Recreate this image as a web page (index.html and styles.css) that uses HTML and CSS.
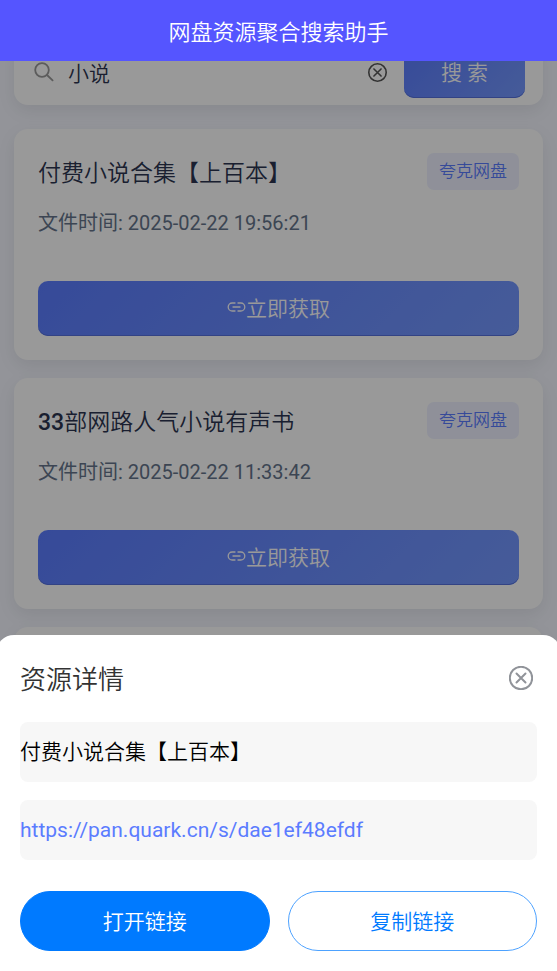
FILE: index.html
```html
<!DOCTYPE html>
<html lang="zh-CN">
<head>
<meta charset="utf-8">
<meta name="viewport" content="width=device-width, initial-scale=1">
<title>网盘资源聚合搜索助手</title>
<link rel="stylesheet" href="styles.css">
</head>
<body>
<header class="topbar"><h1 class="topbar-title">网盘资源聚合搜索助手</h1></header>

<main class="page">
  <form class="search">
    <label class="search-field">
      <svg class="search-icon" viewBox="0 0 20 20" aria-hidden="true"><circle cx="8" cy="8" r="6.8"/><path d="M13 13l5.6 5.4"/></svg>
      <input class="search-input" type="text" value="小说" aria-label="搜索">
    </label>
    <button class="icon-button clear" type="button" aria-label="清除">
      <svg viewBox="0 0 24 24" aria-hidden="true"><circle cx="12" cy="12" r="11"/><path d="M7.500 7.500l9 9M16.500 7.500l-9 9"/></svg>
    </button>
    <button class="primary search-submit" type="button">搜 索</button>
  </form>

  <article class="card">
    <div class="card-head">
      <h2 class="card-title">付费小说合集【上百本】</h2>
      <span class="tag">夸克网盘</span>
    </div>
    <p class="card-time">文件时间: 2025-02-22 19:56:21</p>
    <button class="primary get" type="button">
      <svg class="link-icon" viewBox="0 0 18 10" aria-hidden="true"><path d="M7.500 1H4.700a4 4 0 0 0 0 8H7.500M10.500 1h2.800a4 4 0 0 1 0 8H10.500M5.500 5h7"/></svg>立即获取
    </button>
  </article>

  <article class="card">
    <div class="card-head">
      <h2 class="card-title"><span class="digits">33</span>部网路人气小说有声书</h2>
      <span class="tag">夸克网盘</span>
    </div>
    <p class="card-time">文件时间: 2025-02-22 11:33:42</p>
    <button class="primary get" type="button">
      <svg class="link-icon" viewBox="0 0 18 10" aria-hidden="true"><path d="M7.500 1H4.700a4 4 0 0 0 0 8H7.500M10.500 1h2.800a4 4 0 0 1 0 8H10.500M5.500 5h7"/></svg>立即获取
    </button>
  </article>

  <article class="card"></article>
</main>

<div class="mask"></div>

<section class="sheet" role="dialog" aria-labelledby="sheet-title">
  <div class="sheet-head">
    <h2 class="sheet-title" id="sheet-title">资源详情</h2>
    <button class="icon-button close" type="button" aria-label="关闭">
      <svg viewBox="0 0 24 24" aria-hidden="true"><circle cx="12" cy="12" r="11.200"/><path d="M7.500 7.500l9 9M16.500 7.500l-9 9"/></svg>
    </button>
  </div>
  <div class="sheet-rows">
    <p class="row">付费小说合集【上百本】</p>
    <p class="row"><a class="row-link" href="https://pan.quark.cn/s/dae1ef48efdf">https://pan.quark.cn/s/dae1ef48efdf</a></p>
  </div>
  <div class="actions">
    <button class="pill pill-solid" type="button">打开链接</button>
    <button class="pill pill-outline" type="button">复制链接</button>
  </div>
</section>
</body>
</html>
```
FILE: styles.css
```css
* {
  box-sizing: border-box;
}

body {
  margin: 0;
  overflow: hidden;
  background: #f5f7ff;
  color: #000;
  font-family: Roboto, "Noto Sans CJK SC", sans-serif;
  font-size: 21px;
  font-weight: 350;
}

h1, h2, p {
  margin: 0;
  font-weight: inherit;
}

button, input {
  border: 0;
  padding: 0;
  background: none;
  font: inherit;
}

svg {
  fill: none;
  stroke: currentColor;
  stroke-linecap: round;
}

.topbar {
  position: fixed;
  inset: 0 0 auto;
  z-index: 3;
  display: flex;
  align-items: center;
  justify-content: center;
  height: 61px;
  padding-bottom: 2px;
  background: #5555ff;
  color: #fff;
}

.topbar-title {
  font-size: 22px;
}

.page {
  display: flex;
  flex-direction: column;
  gap: 18px;
  height: 100vh;
  padding: 39px 14px 0;
}

.search,
.card {
  flex-shrink: 0;
  border-radius: 14px;
  background: #fff;
  box-shadow: 0 6px 18px rgba(0, 0, 0, 0.08);
}

.search {
  display: flex;
  align-items: center;
  gap: 17px;
  margin-bottom: 6px;
  padding: 7px 18px 7px 20px;
}

.search-field {
  display: flex;
  flex: 1;
  align-items: center;
  gap: 14px;
  min-width: 0;
}

.search-icon {
  flex: none;
  width: 20px;
  height: 20px;
  color: #999;
  stroke-width: 1.8;
}

.search-input {
  width: 100%;
  min-width: 0;
  color: #2c3550;
}

.icon-button {
  display: block;
  flex: none;
}

.icon-button svg {
  display: block;
  width: 100%;
  height: 100%;
}

.clear {
  width: 19px;
  height: 19px;
  color: #555;
  stroke-width: 2;
}

.primary {
  padding-bottom: 3px;
  border-radius: 10px;
  background: linear-gradient(135deg, #5b7cff, #7599ff);
  box-shadow: inset 0 -1px #5571dc;
  color: #fff;
}

.search-submit {
  width: 121px;
  height: 52px;
}

.card {
  min-height: 231px;
  padding: 24px;
}

.card-head {
  display: flex;
  align-items: center;
  justify-content: space-between;
  height: 37px;
}

.card-title {
  padding-bottom: 2px;
  color: #2c3550;
  font-size: 23px;
}

.digits {
  font-weight: 500;
}

.tag {
  padding: 0 12px;
  border-radius: 7px;
  background: #eef1ff;
  color: #5b7cff;
  font-size: 17px;
  line-height: 37px;
}

.card-time {
  margin: 18px 0 43px;
  color: #64748b;
  font-size: 20px;
  font-weight: 400;
  line-height: 30px;
}

.get {
  display: flex;
  align-items: center;
  justify-content: center;
  width: 100%;
  height: 55px;
}

.link-icon {
  width: 19px;
  height: 10px;
  stroke-width: 1.3;
}

.mask {
  position: fixed;
  inset: 0;
  z-index: 2;
  background: rgba(0, 0, 0, 0.4);
}

.sheet {
  position: fixed;
  inset: auto -4px 0;
  z-index: 4;
  padding: 0 24px 20px;
  border-radius: 18px 18px 0 0;
  background: #fff;
}

.sheet-head {
  display: flex;
  align-items: center;
  justify-content: space-between;
  height: 87px;
  padding: 0 4px 2px 0;
}

.sheet-title {
  color: #333;
  font-size: 26px;
}

.close {
  width: 24px;
  height: 24px;
  color: #909399;
  stroke-width: 2;
}

.sheet-rows {
  display: grid;
  gap: 18px;
}

.row {
  border-radius: 8px;
  background: #f7f7f7;
  line-height: 60px;
}

.row-link {
  color: #5b7cff;
  font-weight: 400;
  text-decoration: none;
}

.actions {
  display: grid;
  grid-template-columns: 1fr 1fr;
  gap: 18px;
  margin-top: 31px;
}

.pill {
  height: 60px;
  padding-bottom: 3px;
  border: 1px solid #007aff;
  border-radius: 30px;
}

.pill-solid {
  background: #007aff;
  color: #fff;
}

.pill-outline {
  border-color: #4da2ff;
  color: #007aff;
}
```
